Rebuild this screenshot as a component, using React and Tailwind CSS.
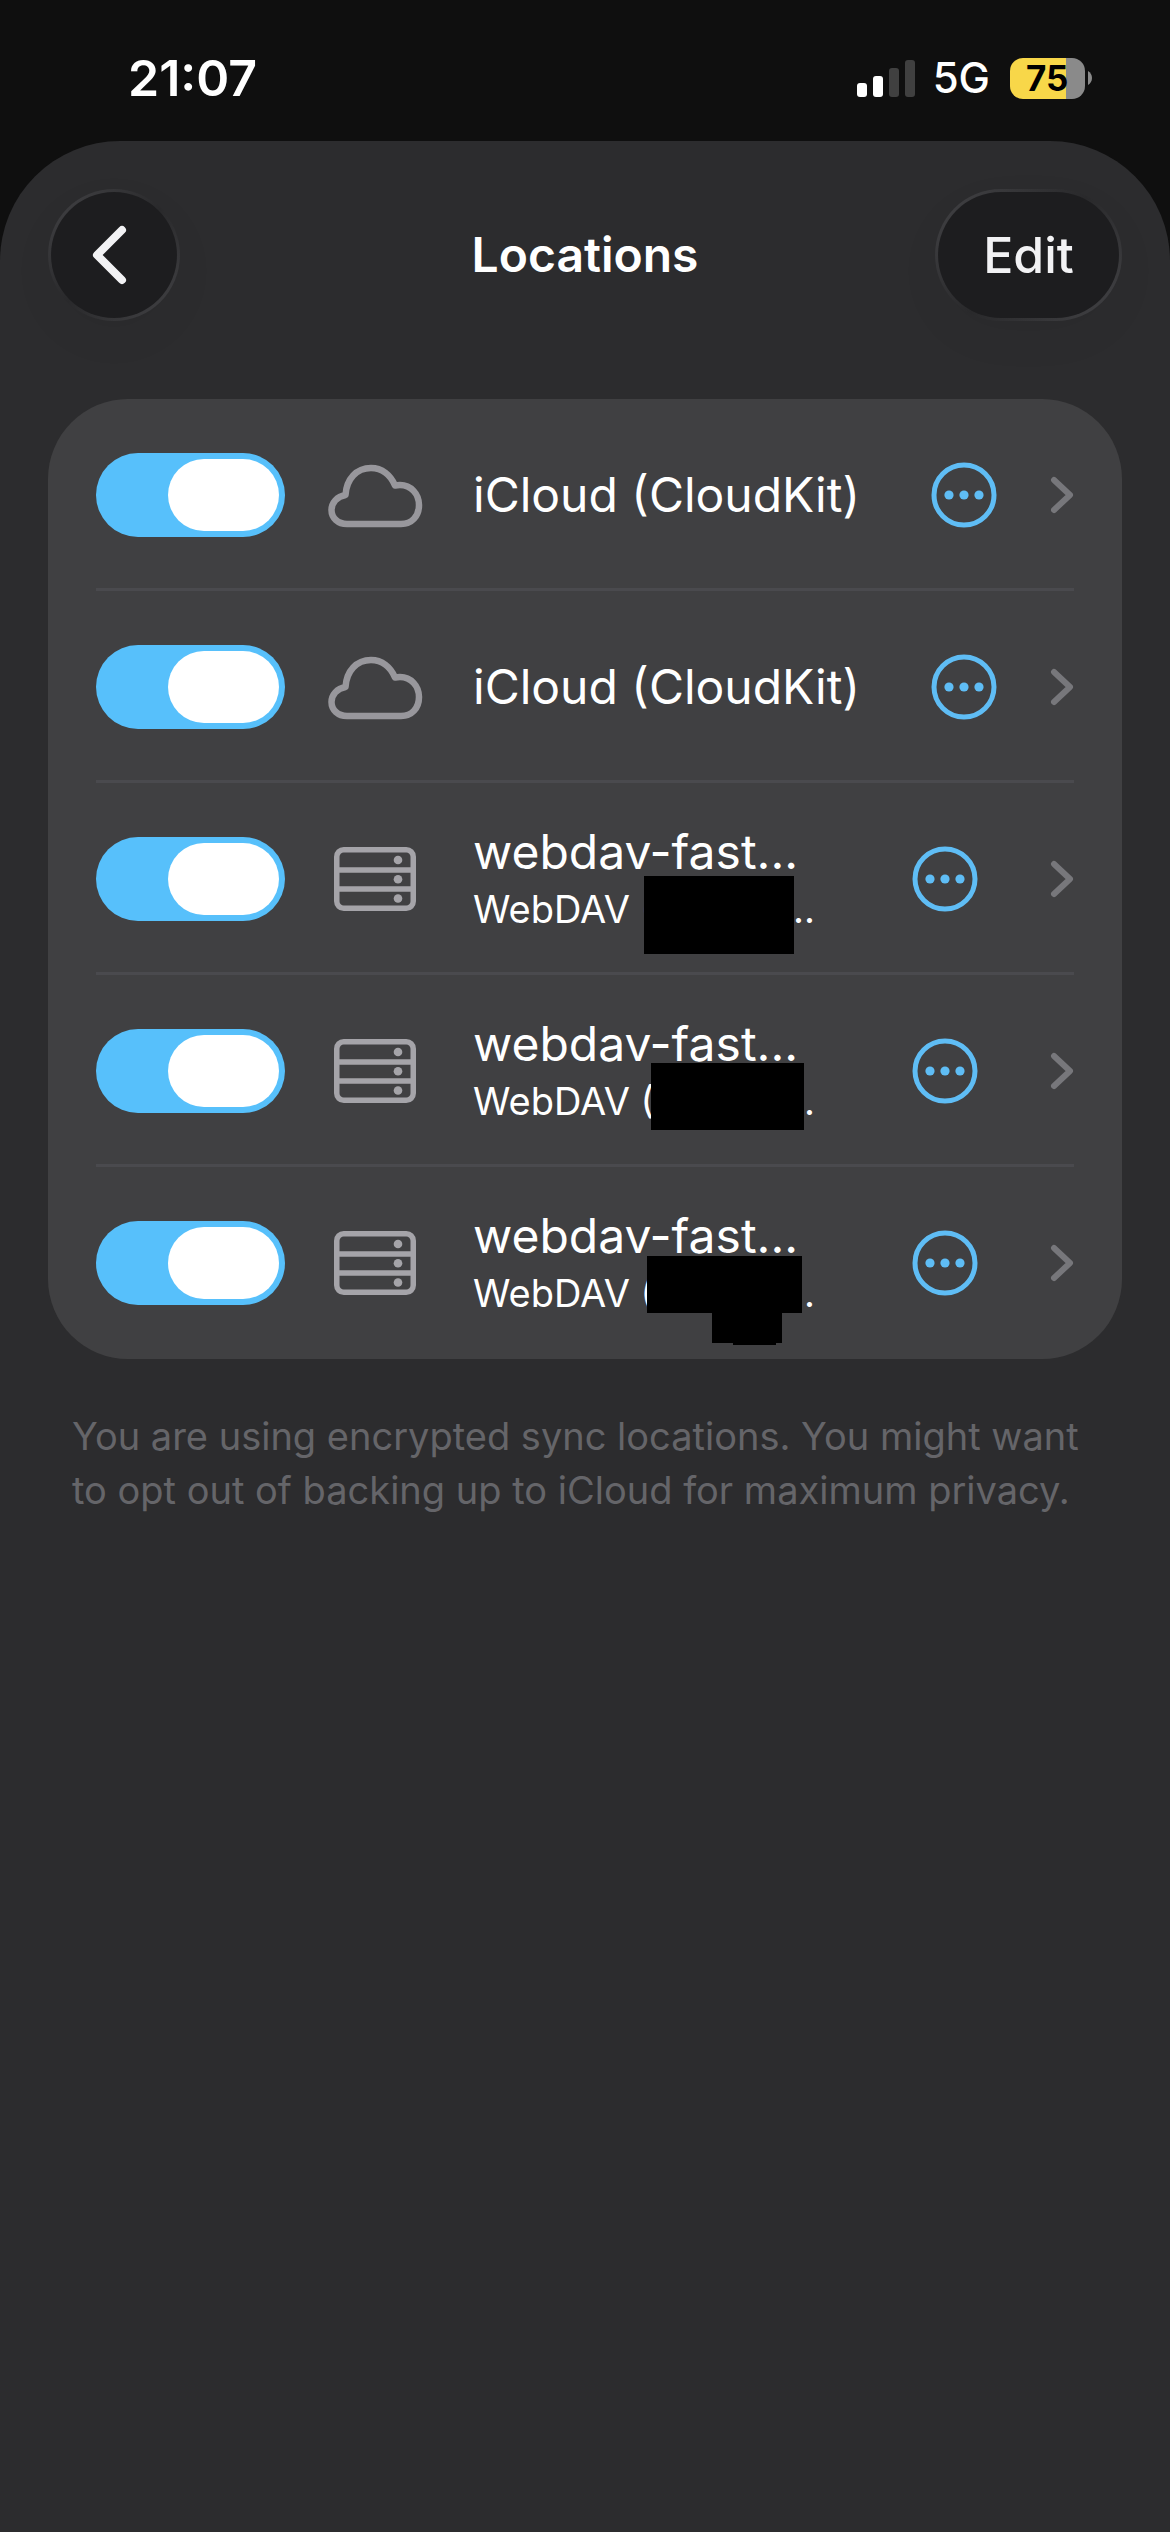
import { useState } from 'react';

const LOCATIONS = [
  { id: 'icloud-1', name: 'iCloud (CloudKit)', icon: 'cloud' },
  { id: 'icloud-2', name: 'iCloud (CloudKit)', icon: 'cloud' },
  {
    id: 'webdav-1',
    name: 'webdav-fast...',
    icon: 'server',
    detail: 'WebDAV (',
    masks: ['left-[171px] -top-1.5 w-[150px] h-[78px]'],
  },
  {
    id: 'webdav-2',
    name: 'webdav-fast...',
    icon: 'server',
    detail: 'WebDAV (',
    masks: ['left-[178px] -top-[11px] w-[153px] h-[67px]'],
  },
  {
    id: 'webdav-3',
    name: 'webdav-fast...',
    icon: 'server',
    detail: 'WebDAV (',
    masks: [
      'left-[174px] -top-2.5 w-[155px] h-[57px]',
      'left-[239px] top-[47px] w-[70px] h-[30px]',
      'left-[260px] top-[77px] w-[43px] h-[2px]',
    ],
  },
];

// Dark glass button, rim lit from the top left and bottom right
const GLASS =
  'h-[132px] rounded-full border-[3px] border-transparent [background:linear-gradient(#1d1d1f,#1d1d1f)_padding-box,linear-gradient(135deg,#434346,#29292b_50%,#434346)_border-box] shadow-[0_16px_48px_rgba(0,0,0,0.04)]';

function CloudIcon() {
  return (
    <svg viewBox="0 0 96 66" className="h-[66px] w-24" fill="none" stroke="#98979c" strokeWidth="6.5" strokeLinejoin="round">
      <path d="M20 62 H74 C85 62 92 54 92 43 C92 32 84 23 73 23 C71 23 70 23 68 23.5 C63.5 13 55 6 44 6 C29.5 6 19.5 17 18.5 33 C10 34.5 4.5 41 4.5 48 C4.5 56 11 62 20 62 Z" />
    </svg>
  );
}

function ServerIcon() {
  return (
    <svg viewBox="0 0 82 64" className="h-16 w-[82px]" fill="none" stroke="#a5a4a9" strokeWidth="5.5">
      <rect x="2.75" y="2.75" width="76.5" height="58.5" rx="7" />
      <path d="M3 23 H79 M3 42 H79" />
      <g fill="#a5a4a9" stroke="none">
        <circle cx="64" cy="13" r="4.3" />
        <circle cx="64" cy="32.3" r="4.3" />
        <circle cx="64" cy="51.5" r="4.3" />
      </g>
    </svg>
  );
}

function MoreIcon() {
  return (
    <svg viewBox="0 0 66 66" className="size-[66px]" fill="#5fbdf5">
      <circle cx="33" cy="33" r="30" fill="none" stroke="#5fbdf5" strokeWidth="5" />
      <circle cx="18" cy="33" r="4.6" />
      <circle cx="33" cy="33" r="4.6" />
      <circle cx="48" cy="33" r="4.6" />
    </svg>
  );
}

function StatusBar() {
  return (
    <div className="flex h-[141px] items-center justify-between pr-[78px] pl-32 pb-px">
      <time className="pt-[15px] text-[50px] leading-[60px] font-semibold">21:07</time>
      <div className="flex items-center pt-4">
        <div className="flex h-[37px] items-end gap-1.5">
          <span className="h-3.5 w-2.5 rounded-[3px] bg-white" />
          <span className="h-[21px] w-2.5 rounded-[3px] bg-white" />
          <span className="h-[29px] w-2.5 rounded-[3px] bg-[#404040]" />
          <span className="h-[37px] w-2.5 rounded-[3px] bg-[#404040]" />
        </div>
        <span className="ml-[18px] text-[42px] leading-[42px] font-medium">5G</span>
        <div className="ml-5 flex items-center gap-[3px]">
          <div className="flex h-[41px] w-[75px] items-center rounded-[13px] bg-[linear-gradient(90deg,#f8d749_75%,#8a8a8a_75%)] pl-4 text-[35px] leading-[41px] font-bold text-black">
            75
          </div>
          <svg viewBox="0 0 4 14" className="h-3.5 w-1" fill="#8a8a8a">
            <path d="M0 0 C2.5 1.5 4 4 4 7 C4 10 2.5 12.5 0 14 Z" />
          </svg>
        </div>
      </div>
    </div>
  );
}

function LocationRow({ location, enabled, onToggle, last }) {
  const hasDetail = Boolean(location.detail);

  return (
    <li
      className={`flex h-48 items-center border-y-[3px] border-t-transparent ${
        last ? 'border-b-transparent' : 'border-b-[#4a4a4e]'
      }`}
    >
      <input
        type="checkbox"
        role="switch"
        aria-label={`Enable ${location.name}`}
        checked={enabled}
        onChange={onToggle}
        className="flex h-[84px] w-[189px] shrink-0 appearance-none items-center rounded-full bg-[#5a5a5e] p-1.5 before:h-[72px] before:w-[111px] before:rounded-full before:bg-white before:content-[''] checked:justify-end checked:bg-[#57c0fb]"
      />
      <div className="ml-[42px] flex w-24 shrink-0 justify-center">
        {location.icon === 'cloud' ? <CloudIcon /> : <ServerIcon />}
      </div>
      <div className="ml-[50px] min-w-0 flex-1">
        <div className="text-[48px] leading-[60px] whitespace-nowrap">{location.name}</div>
        {hasDetail && (
          <div className="relative flex w-[342px] justify-between text-[38px] leading-[54px]">
            <span>{location.detail}</span>
            <span>...</span>
            {location.masks.map(mask => (
              <span key={mask} className={`absolute bg-black ${mask}`} />
            ))}
          </div>
        )}
      </div>
      <button type="button" aria-label="More options" className={hasDetail ? 'mr-[72px]' : 'mr-[53px]'}>
        <MoreIcon />
      </button>
      <svg viewBox="0 0 24 38" className="h-[38px] w-6" fill="none" stroke="#77777b" strokeWidth="6" strokeLinecap="round" strokeLinejoin="round">
        <path d="M4 4 L20 19 L4 34" />
      </svg>
    </li>
  );
}

export default function App() {
  const [enabled, setEnabled] = useState(LOCATIONS.map(l => l.id));

  const toggleLocation = (id) => {
    setEnabled(prev => (prev.includes(id) ? prev.filter(x => x !== id) : [...prev, id]));
  };

  return (
    <div className="flex min-h-screen flex-col bg-[#0f0f0f] font-['Inter',sans-serif] text-white">
      <StatusBar />

      <main className="flex-1 rounded-t-[120px] bg-[#2c2c2e] px-12 pt-12">
        <header className="grid grid-cols-[1fr_auto_1fr] items-center">
          <button type="button" aria-label="Back" className={`${GLASS} flex w-[132px] items-center justify-center`}>
            <svg viewBox="0 0 44 60" className="mr-2.5 h-[60px] w-11" fill="none" stroke="#f2f2f4" strokeWidth="8" strokeLinecap="round" strokeLinejoin="round">
              <path d="M35 5 L10 30 L35 55" />
            </svg>
          </button>
          <h1 className="text-[48px] leading-[60px] font-semibold">Locations</h1>
          <button type="button" className={`${GLASS} w-[187px] justify-self-end text-[50px] font-medium text-[#f2f2f4]`}>
            Edit
          </button>
        </header>

        <ul className="mt-[78px] rounded-[80px] bg-[#404042] px-12">
          {LOCATIONS.map((location, i) => (
            <LocationRow
              key={location.id}
              location={location}
              enabled={enabled.includes(location.id)}
              onToggle={() => toggleLocation(location.id)}
              last={i === LOCATIONS.length - 1}
            />
          ))}
        </ul>

        <p className="mt-[50px] px-6 text-[38px] leading-[54px] text-[#656569]">
          You are using encrypted sync locations. You might want to opt out of backing up to iCloud for maximum privacy.
        </p>
      </main>
    </div>
  );
}
